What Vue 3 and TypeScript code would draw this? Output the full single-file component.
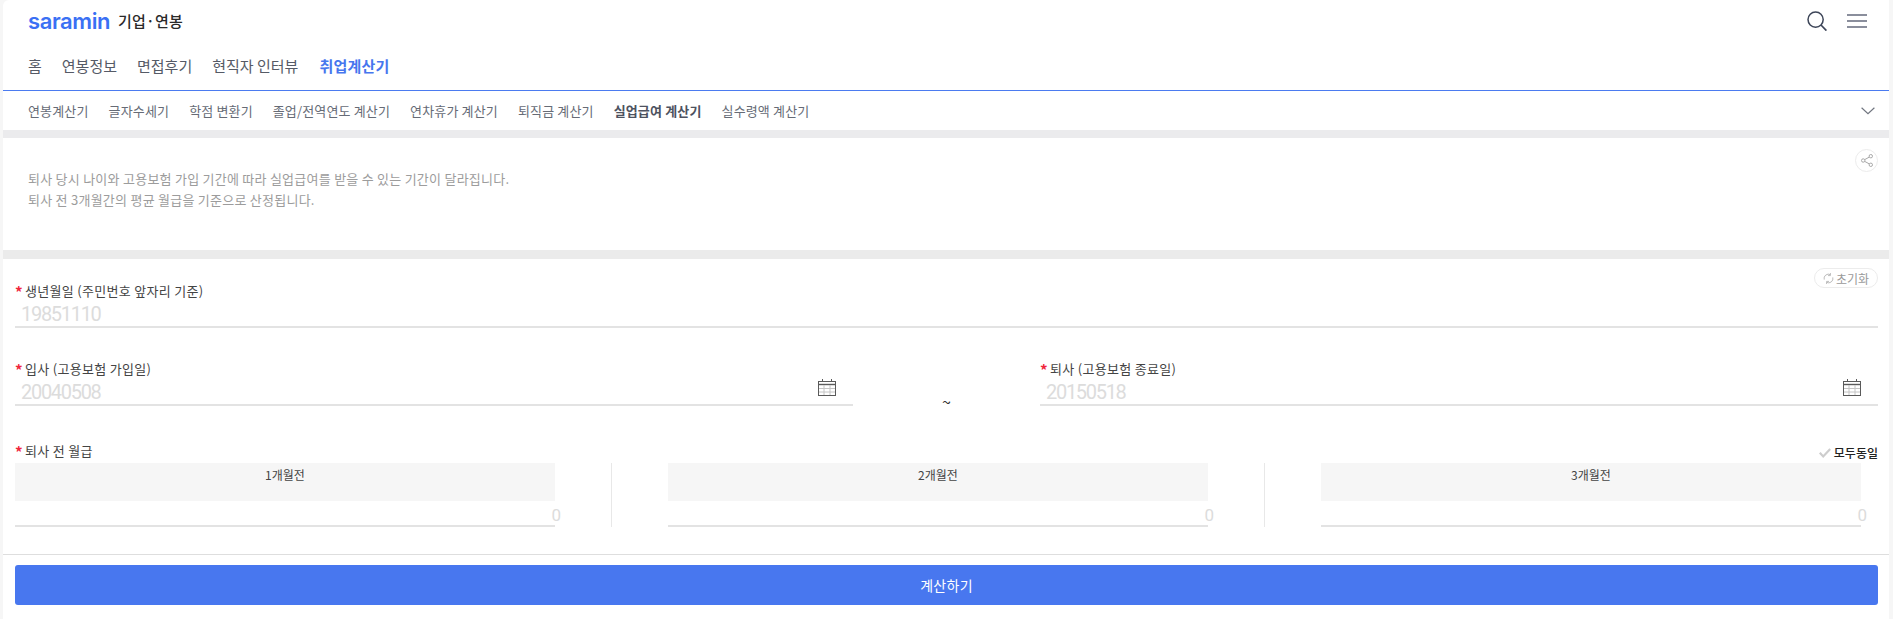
<script setup lang="ts">
const mainTabs = ["홈", "연봉정보", "면접후기", "현직자 인터뷰", "취업계산기"];
const subTabs = [
  "연봉계산기",
  "글자수세기",
  "학점 변환기",
  "졸업/전역연도 계산기",
  "연차휴가 계산기",
  "퇴직금 계산기",
  "실업급여 계산기",
  "실수령액 계산기",
];
const months = ["1개월전", "2개월전", "3개월전"];
</script>

<template>
  <div class="page">
    <header class="head">
      <div class="brand">
        <span class="logo">saramin</span>
        <span class="service">기업·연봉</span>
      </div>
      <div class="head-icons">
        <svg width="20" height="20" viewBox="0 0 20 20" fill="none" stroke="#3d4558">
          <circle cx="8.6" cy="8.6" r="7.6" stroke-width="1.5" />
          <path d="M14 14 19.4 19.6" stroke-width="1.7" />
        </svg>
        <svg width="20" height="14" viewBox="0 0 20 14" fill="none" stroke="#646a7c" stroke-width="1.6">
          <path d="M0 1h20M0 7h20M0 13h20" />
        </svg>
      </div>
    </header>

    <nav class="tabs">
      <a v-for="tab in mainTabs" :key="tab" :class="{ on: tab === '취업계산기' }">{{ tab }}</a>
    </nav>

    <nav class="subtabs">
      <a v-for="tab in subTabs" :key="tab" :class="{ on: tab === '실업급여 계산기' }">{{ tab }}</a>
      <svg class="chevron" width="14" height="8" viewBox="0 0 14 8" fill="none" stroke="#70757f" stroke-width="1.2">
        <path d="M.6.8 7 6.6 13.4.8" />
      </svg>
    </nav>

    <section class="intro">
      <button class="share">
        <svg width="12" height="13" viewBox="0 0 12 13" fill="none" stroke="#a8a8a8">
          <circle cx="2.2" cy="6.5" r="1.7" />
          <circle cx="9.8" cy="2.2" r="1.7" />
          <circle cx="9.8" cy="10.8" r="1.7" />
          <path d="M3.7 5.6 8.3 3.1M3.7 7.4 8.3 9.9" />
        </svg>
      </button>
      <p>퇴사 당시 나이와 고용보험 가입 기간에 따라 실업급여를 받을 수 있는 기간이 달라집니다.</p>
      <p>퇴사 전 3개월간의 평균 월급을 기준으로 산정됩니다.</p>
    </section>

    <form class="form" @submit.prevent>
      <button class="reset" type="button">
        <svg width="11" height="11" viewBox="0 0 11 11" fill="none" stroke="#bdbdbd" stroke-width="1">
          <path d="M1.2 6.6A4.3 4.3 0 0 1 7.6 1.8M9.8 4.4A4.3 4.3 0 0 1 3.4 9.2" />
          <path d="M7.4 0v2.6H5M3.6 11V8.4H6" />
        </svg>
        초기화
      </button>

      <div class="field birth">
        <label><i>*</i>생년월일 (주민번호 앞자리 기준)</label>
        <div class="value">19851110</div>
      </div>

      <div class="dates">
        <div class="field date">
          <label><i>*</i>입사 (고용보험 가입일)</label>
          <div class="value">
            20040508
            <svg class="cal" width="18" height="17" viewBox="0 0 18 17" fill="none" stroke="#5a5a5a">
              <rect x=".5" y="2.5" width="17" height="14" />
              <path d="M0 5.5h18" stroke-width="1.4" />
              <path d="M4.5 0v3M13.5 0v3" />
              <path d="M6 6v10M12 6v10M1 9.5h16M1 13h16" stroke="#c4c4c4" />
            </svg>
          </div>
        </div>
        <span class="tilde">~</span>
        <div class="field date">
          <label><i>*</i>퇴사 (고용보험 종료일)</label>
          <div class="value">
            20150518
            <svg class="cal" width="18" height="17" viewBox="0 0 18 17" fill="none" stroke="#5a5a5a">
              <rect x=".5" y="2.5" width="17" height="14" />
              <path d="M0 5.5h18" stroke-width="1.4" />
              <path d="M4.5 0v3M13.5 0v3" />
              <path d="M6 6v10M12 6v10M1 9.5h16M1 13h16" stroke="#c4c4c4" />
            </svg>
          </div>
        </div>
      </div>

      <div class="salary-head">
        <label><i>*</i>퇴사 전 월급</label>
        <span class="same">
          <svg width="12" height="10" viewBox="0 0 12 10" fill="none" stroke="#cdcdcd" stroke-width="2.2">
            <path d="M.8 4.8 4.2 8.4 11.2 1" />
          </svg>
          모두동일
        </span>
      </div>
      <div class="months">
        <template v-for="(month, i) in months" :key="month">
          <span v-if="i > 0" class="sep"></span>
          <div class="month">
            <div class="month-title">{{ month }}</div>
            <div class="month-input"><b>0</b></div>
          </div>
        </template>
      </div>
    </form>

    <div class="submit">
      <button type="button">계산하기</button>
    </div>
  </div>
</template>

<style scoped>
.page {
  position: relative;
  box-sizing: border-box;
  width: 1886px;
  height: 619px;
  margin-left: 3px;
  background: #fff;
  border-top-left-radius: 6px;
  font-family: "Noto Sans CJK KR", "Noto Sans", sans-serif;
  color: #444;
  overflow: hidden;
}
.head {
  display: flex;
  align-items: center;
  justify-content: space-between;
  height: 41px;
  padding: 0 22px 0 25px;
}
.brand {
  display: flex;
  align-items: center;
  gap: 8px;
}
.logo {
  font-family: Inter, sans-serif;
  font-size: 22px;
  font-weight: 600;
  line-height: 24px;
  letter-spacing: -0.4px;
  color: #3a70f4;
}
.service {
  font-size: 15px;
  font-weight: 500;
  letter-spacing: 0.2px;
  color: #2a2a2a;
}
.head-icons {
  display: flex;
  align-items: center;
  gap: 20px;
}
.tabs {
  display: flex;
  align-items: center;
  gap: 20px;
  height: 49px;
  padding-left: 25px;
  border-bottom: 1px solid #4b7bf0;
  font-size: 15px;
  color: #555a66;
}
.tabs .on {
  margin-left: 1px;
  font-weight: 700;
  letter-spacing: 0.2px;
  color: #4676ee;
}
.subtabs {
  display: flex;
  align-items: center;
  gap: 20px;
  height: 39px;
  padding: 0 14px 0 25px;
  font-size: 13px;
  letter-spacing: 0.15px;
  color: #666b76;
}
.subtabs .on {
  font-weight: 700;
  color: #4d5260;
}
.chevron {
  margin-left: auto;
}
.intro {
  position: relative;
  box-sizing: border-box;
  height: 120px;
  padding-top: 30px;
  padding-left: 25px;
  border-top: 8px solid #ebebed;
  font-size: 13px;
  line-height: 21px;
  letter-spacing: 0.25px;
  color: #9c9c9c;
}
.intro p {
  margin: 0;
}
.share {
  position: absolute;
  top: 11px;
  right: 11px;
  display: flex;
  align-items: center;
  justify-content: center;
  width: 23px;
  height: 23px;
  padding: 0;
  background: #fff;
  border: 1px solid #ececec;
  border-radius: 50%;
}
.form {
  position: relative;
  box-sizing: border-box;
  height: 305px;
  padding: 0 11px 0 12px;
  border-top: 9px solid #ebebeb;
  border-bottom: 1px solid #dedede;
}
.reset {
  position: absolute;
  top: 9px;
  right: 11px;
  display: flex;
  align-items: center;
  justify-content: center;
  gap: 2px;
  box-sizing: border-box;
  width: 64px;
  height: 20px;
  padding: 0;
  background: #fff;
  border: 1px solid #ececec;
  border-radius: 10px;
  font-family: inherit;
  font-size: 12px;
  color: #9a9a9a;
}
label {
  display: block;
  font-size: 13px;
  line-height: 18px;
  letter-spacing: 0.3px;
  color: #444;
}
label i {
  display: inline-block;
  width: 10px;
  font-size: 15px;
  font-weight: 700;
  line-height: 14px;
  vertical-align: -2px;
  font-style: normal;
  color: #f0263c;
}
.birth {
  padding-top: 23px;
}
.value {
  position: relative;
  height: 26px;
  padding-left: 6px;
  border-bottom: 2px solid #e3e3e3;
  font-family: Roboto, "Liberation Sans", sans-serif;
  font-size: 20px;
  line-height: 28px;
  letter-spacing: -1.3px;
  color: #dcdcdc;
}
.cal {
  position: absolute;
  right: 17px;
  top: 1px;
}
.dates {
  display: flex;
  justify-content: space-between;
  margin-top: 32px;
}
.date {
  width: 838px;
}
.tilde {
  flex: 1;
  box-sizing: border-box;
  height: 46px;
  padding-top: 32px;
  font-size: 16px;
  line-height: 18px;
  text-align: center;
  color: #333;
}
.salary-head {
  display: flex;
  align-items: flex-start;
  justify-content: space-between;
  height: 18px;
  margin-top: 36px;
}
.same {
  display: flex;
  align-items: center;
  gap: 3px;
  padding-top: 3px;
  font-size: 12px;
  line-height: 15px;
  font-weight: 500;
  color: #222;
}
.months {
  display: flex;
  gap: 56px;
  margin-top: 3px;
}
.month {
  width: 540px;
}
.sep {
  width: 1px;
  background: #e8e8e8;
}
.month-title {
  height: 38px;
  padding-top: 3px;
  box-sizing: border-box;
  background: #f6f6f6;
  font-size: 12px;
  line-height: 18px;
  text-align: center;
  color: #444;
}
.month-input {
  display: flex;
  justify-content: flex-end;
  box-sizing: border-box;
  height: 26px;
  border-bottom: 2px solid #e3e3e3;
}
.month-input b {
  margin-right: -6px;
  font-family: Roboto, "Liberation Sans", sans-serif;
  font-size: 17px;
  font-weight: 400;
  line-height: 28px;
  color: #dcdcdc;
}
.submit {
  padding: 10px 11px 0 12px;
}
.submit button {
  display: block;
  width: 100%;
  height: 40px;
  background: #4877ef;
  border: 0;
  border-radius: 3px;
  font-family: inherit;
  font-size: 14px;
  letter-spacing: 0.3px;
  color: #fff;
}
</style>

<style>
html,
body {
  background: #f6f6f6;
}
</style>
